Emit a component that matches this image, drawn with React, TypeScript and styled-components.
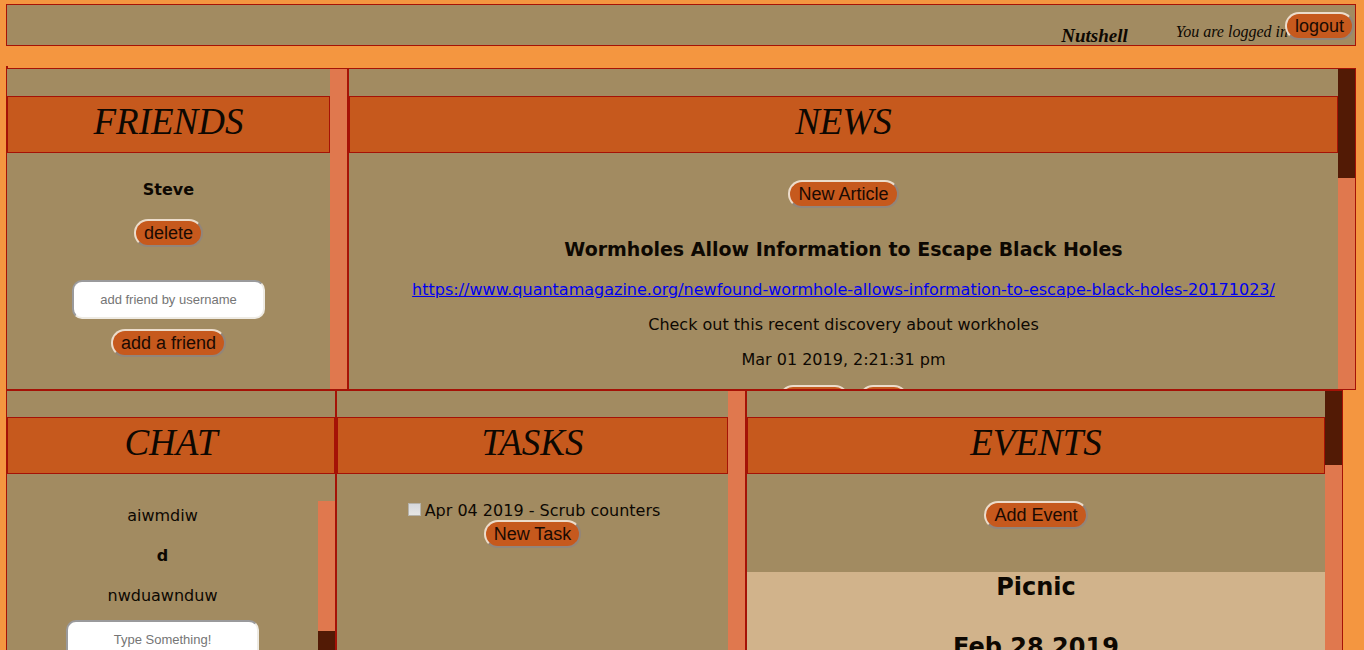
import React from "react";
import styled, { createGlobalStyle } from "styled-components";

const line = "#a51206";
const olive = "#a28b61";
const rust = "#c6591d";
const coral = "#e0784e";
const umber = "#521a05";
const script = `"Liberation Serif", serif`;

const GlobalStyle = createGlobalStyle`
  * { box-sizing: border-box; }
  body {
    margin: 0;
    background: #f49640;
    color: #0d0802;
    font-family: Verdana, "DejaVu Sans", sans-serif;
    font-size: 16px;
    line-height: 19px;
  }
`;

const Page = styled.div`
  height: 100vh;
  overflow: hidden;
  padding: 4px 8px 0 6px;
`;

const TopBar = styled.header`
  display: flex;
  justify-content: flex-end;
  align-items: flex-end;
  height: 42px;
  border: 1px solid ${line};
  background: ${olive};
  font-family: ${script};
  font-style: italic;
`;

const Brand = styled.span`
  margin-right: 48px;
  font-size: 19px;
  line-height: 18px;
  font-weight: bold;
`;

const Status = styled.span`
  margin-right: -3px;
  padding-bottom: 4px;
  font-size: 16px;
  line-height: 18px;
`;

const Outlet = styled.div`
  width: 2px;
  height: 2px;
  margin-top: 20px;
  background: ${line};
`;

const Row = styled.div<{ $columns: string; $lead: number }>`
  display: grid;
  grid-template-columns: ${(p) => p.$columns};
  height: calc(50vh - 3px);
  --lead: ${(p) => p.$lead}px;
`;

const LowerRow = styled(Row)`
  margin-right: 13px;
`;

const Panel = styled.section`
  display: flex;
  min-width: 0;
  overflow: hidden;
  border: 1px solid ${line};
  background: ${olive};
`;

const Content = styled.div`
  display: flex;
  flex-direction: column;
  flex: 1;
  min-width: 0;
  overflow: hidden;
  padding-top: var(--lead);
  text-align: center;
  align-items: center;

  > * { flex-shrink: 0; }
`;

const Title = styled.h1`
  align-self: stretch;
  margin: 0 0 27px;
  padding: 5px 0 10px;
  border: 1px solid ${line};
  background: ${rust};
  font-family: ${script};
  font-style: italic;
  font-weight: normal;
  font-size: 37px;
  line-height: 40px;
`;

const Track = styled.div`
  display: flex;
  flex-direction: column;
  flex: none;
  width: 17px;
  background: ${coral};
`;

const Thumb = styled.div<{ $size: string; $end?: boolean }>`
  height: ${(p) => p.$size};
  margin-top: ${(p) => (p.$end ? "auto" : "0")};
  background: ${umber};
`;

const Button = styled.button`
  height: 28px;
  padding: 0 8px;
  border: 2px solid;
  border-color: #ecdccb #92857a #92857a #ecdccb;
  border-radius: 15px;
  background: ${rust};
  color: #1a0a02;
  font-family: Arial, "Liberation Sans", sans-serif;
  font-size: 18px;
  line-height: 20px;
`;

const LogoutButton = styled(Button)`
  position: relative;
  margin: 0 1px 5px 0;
`;

const Field = styled.input`
  width: 193px;
  height: 39px;
  padding: 0 8px;
  border: 2px solid;
  border-color: #9a9a9c #eeebe4 #eeebe4 #9a9a9c;
  border-radius: 10px;
  background: #fff;
  text-align: center;
  font-family: Arial, "Liberation Sans", sans-serif;
  font-size: 13px;

  &::placeholder { color: #757575; }
`;

const FriendName = styled.h4`
  margin: 0 0 20px;
  font-size: 16px;
`;

const AddFriend = styled.form`
  display: flex;
  flex-direction: column;
  align-items: center;
  gap: 10px;
  margin-top: 33px;
`;

const Article = styled.article`
  display: flex;
  flex-direction: column;
  gap: 16px;
  margin-top: 32px;
`;

const Headline = styled.h3`
  margin: 0 0 5px;
  font-size: 19px;
`;

const Text = styled.p`
  margin: 0;
`;

const SourceLink = styled.a`
  color: #0000ee;
`;

const Actions = styled.div`
  display: flex;
  justify-content: center;
  gap: 10px;
`;

const ChatArea = styled.div`
  display: flex;
  align-self: stretch;
  flex: 1;
`;

const Messages = styled.div`
  display: flex;
  flex-direction: column;
  align-items: center;
  flex: 1;
  gap: 21px;
  padding-top: 5px;
`;

const Sender = styled.strong`
  font-weight: bold;
`;

const ChatForm = styled.form`
  margin-top: -6px;
`;

const Task = styled.label`
  display: flex;
  align-items: center;
`;

const Check = styled.input`
  appearance: none;
  width: 13px;
  height: 13px;
  margin: 0 4px 2px 3px;
  border: 1px solid #b5b2aa;
  background: linear-gradient(#d6d8dc, #e6e6e4);
`;

const EventCard = styled.article`
  align-self: stretch;
  margin-top: 43px;
  background: #d1b38b;
  line-height: 30px;
`;

const EventLine = styled.h2`
  margin: 0 0 30px;
  font-size: 24px;
`;

export default function App() {
  return (
    <>
      <GlobalStyle />
      <Page>
        <TopBar>
          <Brand>Nutshell</Brand>
          <Status>You are logged in</Status>
          <LogoutButton type="button">logout</LogoutButton>
        </TopBar>
        <Outlet />
        <Row $columns="minmax(0, 342fr) minmax(0, 1008fr)" $lead={27}>
          <Panel>
            <Content>
              <Title>FRIENDS</Title>
              <FriendName>Steve</FriendName>
              <Button type="button">delete</Button>
              <AddFriend>
                <Field aria-label="Friend username" placeholder="add friend by username" />
                <Button type="button">add a friend</Button>
              </AddFriend>
            </Content>
            <Track />
          </Panel>
          <Panel>
            <Content>
              <Title>NEWS</Title>
              <Button type="button">New Article</Button>
              <Article>
                <Headline>Wormholes Allow Information to Escape Black Holes</Headline>
                <SourceLink href="https://www.quantamagazine.org/newfound-wormhole-allows-information-to-escape-black-holes-20171023/">
                  https://www.quantamagazine.org/newfound-wormhole-allows-information-to-escape-black-holes-20171023/
                </SourceLink>
                <Text>Check out this recent discovery about workholes</Text>
                <Text>Mar 01 2019, 2:21:31 pm</Text>
                <Actions>
                  <Button type="button">delete</Button>
                  <Button type="button">edit</Button>
                </Actions>
              </Article>
            </Content>
            <Track>
              <Thumb $size="34%" />
            </Track>
          </Panel>
        </Row>
        <LowerRow
          $columns="minmax(0, 330fr) minmax(0, 410fr) minmax(0, 597fr)"
          $lead={26}
        >
          <Panel>
            <Content>
              <Title>CHAT</Title>
              <ChatArea>
                <Messages>
                  <Text>aiwmdiw</Text>
                  <Sender>d</Sender>
                  <Text>nwduawnduw</Text>
                  <ChatForm>
                    <Field aria-label="Message" placeholder="Type Something!" />
                  </ChatForm>
                </Messages>
                <Track>
                  <Thumb $size="38%" $end />
                </Track>
              </ChatArea>
            </Content>
          </Panel>
          <Panel>
            <Content>
              <Title>TASKS</Title>
              <Task>
                <Check type="checkbox" />
                Apr 04 2019 - Scrub counters
              </Task>
              <Button type="button">New Task</Button>
            </Content>
            <Track />
          </Panel>
          <Panel>
            <Content>
              <Title>EVENTS</Title>
              <Button type="button">Add Event</Button>
              <EventCard>
                <EventLine>Picnic</EventLine>
                <EventLine>Feb 28 2019</EventLine>
              </EventCard>
            </Content>
            <Track>
              <Thumb $size="23%" />
            </Track>
          </Panel>
        </LowerRow>
      </Page>
    </>
  );
}
